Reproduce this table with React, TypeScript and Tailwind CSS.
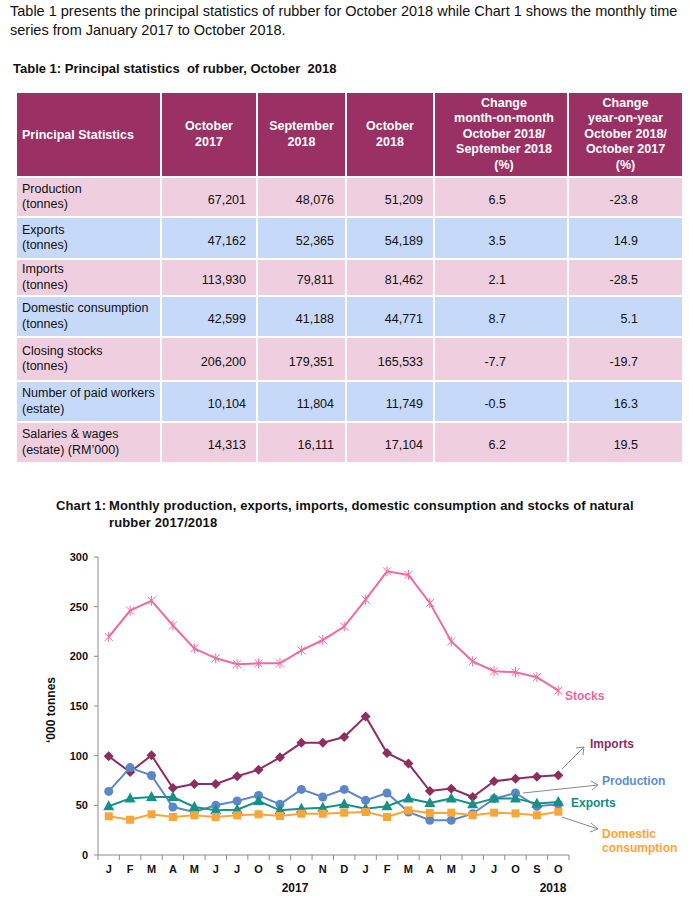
import React from "react";

const rows = [
  { a: "Production", b: "(tonnes)", v: ["67,201", "48,076", "51,209"], m: "6.5", y: "-23.8", bg: "bg-[#efcedf]", h: "h-[38px]" },
  { a: "Exports", b: "(tonnes)", v: ["47,162", "52,365", "54,189"], m: "3.5", y: "14.9", bg: "bg-[#c6d9f9]", h: "h-[40px]" },
  { a: "Imports", b: "(tonnes)", v: ["113,930", "79,811", "81,462"], m: "2.1", y: "-28.5", bg: "bg-[#efcedf]", h: "h-[35px]" },
  { a: "Domestic consumption", b: "(tonnes)", v: ["42,599", "41,188", "44,771"], m: "8.7", y: "5.1", bg: "bg-[#c6d9f9]", h: "h-[39px]" },
  { a: "Closing stocks", b: "(tonnes)", v: ["206,200", "179,351", "165,533"], m: "-7.7", y: "-19.7", bg: "bg-[#efcedf]", h: "h-[42px]" },
  { a: "Number of paid workers", b: "(estate)", v: ["10,104", "11,804", "11,749"], m: "-0.5", y: "16.3", bg: "bg-[#c6d9f9]", h: "h-[39px]" },
  { a: "Salaries & wages", b: "(estate) (RM\u2019000)", v: ["14,313", "16,111", "17,104"], m: "6.2", y: "19.5", bg: "bg-[#efcedf]", h: "h-[39px]" },
];

const stocks = [219.5, 246, 256, 231, 208, 198, 192, 193, 193, 206, 216.5, 230, 257, 285.6, 282, 253.7, 215, 195, 185, 184, 179, 165.5];
const imports = [99.4, 83.5, 100.4, 67.4, 71.5, 71.5, 79.2, 85.9, 98.3, 113, 113, 118.8, 139.5, 102.7, 92, 64.4, 66.8, 58.4, 74.2, 76.8, 78.9, 80.2];
const production = [64, 88, 80, 48.3, 43.3, 50, 54.4, 60, 51, 66, 58.4, 66, 55, 62.4, 43.3, 35, 35, 41.6, 56.7, 62.4, 49, 51];
const exportsD = [49, 57, 58.4, 58.4, 48.3, 45, 45.6, 54.4, 45, 46.6, 47.6, 51, 46.6, 49, 57, 52.4, 57, 51, 57, 57, 51.7, 53.3];
const domestic = [39, 35.5, 41, 38.3, 40, 38.3, 40, 41, 39.3, 41.6, 41.6, 42.6, 43.3, 38.3, 45, 42.3, 42.6, 40, 42.6, 41.9, 40, 43.6];

const months = ["J", "F", "M", "A", "M", "J", "J", "O", "S", "O", "N", "D", "J", "F", "M", "A", "M", "J", "J", "O", "S", "O"];

const X0 = 98;
const STEP = 21.41;
const Y0 = 313;
const K = 0.9933;
const xOf = (i: number) => X0 + STEP * (i + 0.5);
const yOf = (v: number) => Y0 - v * K;
const pts = (d: number[]) => d.map((v, i) => `${xOf(i).toFixed(1)},${yOf(v).toFixed(1)}`).join(" ");

const C = {
  stocks: "#ee6ba0",
  imports: "#8e2d5f",
  production: "#5b87c6",
  exports: "#179089",
  domestic: "#f9a53a",
};

function Chart() {
  const font = "'Liberation Sans', Arial, sans-serif";
  return (
    <svg width="689" height="358" viewBox="0 0 689 358" className="block">
      <line x1={X0} y1={15} x2={X0} y2={Y0} stroke="#8c8c8c" strokeWidth="1" />
      {[0, 50, 100, 150, 200, 250, 300].map((v) => (
        <g key={v}>
          <line x1={X0 - 4} y1={yOf(v)} x2={X0} y2={yOf(v)} stroke="#8c8c8c" strokeWidth="1" />
          <text x={88} y={yOf(v) + 4} textAnchor="end" fontFamily={font} fontSize="11" fontWeight="700" fill="#111">
            {v}
          </text>
        </g>
      ))}
      <line x1={X0} y1={Y0} x2={X0 + STEP * 22} y2={Y0} stroke="#8c8c8c" strokeWidth="1" />
      {Array.from({ length: 23 }).map((_, i) => (
        <line key={i} x1={X0 + STEP * i} y1={Y0} x2={X0 + STEP * i} y2={Y0 + 5} stroke="#8c8c8c" strokeWidth="1" />
      ))}
      {months.map((m, i) => (
        <text key={i} x={xOf(i)} y={331} textAnchor="middle" fontFamily={font} fontSize="11" fontWeight="700" fill="#111">
          {m}
        </text>
      ))}
      <text x={295} y={350} textAnchor="middle" fontFamily={font} fontSize="12" fontWeight="700" fill="#111">
        2017
      </text>
      <text x={553} y={350} textAnchor="middle" fontFamily={font} fontSize="12" fontWeight="700" fill="#111">
        2018
      </text>
      <text
        x={0}
        y={0}
        transform="translate(55,168) rotate(-90)"
        textAnchor="middle"
        fontFamily={font}
        fontSize="12"
        fontWeight="700"
        fill="#111"
      >
        {"\u2018000 tonnes"}
      </text>

      <polyline points={pts(stocks)} fill="none" stroke={C.stocks} strokeWidth="2" />
      {stocks.map((v, i) => {
        const x = xOf(i);
        const y = yOf(v);
        return (
          <g key={i} stroke={C.stocks} strokeWidth="1">
            <line x1={x - 4} y1={y - 4} x2={x + 4} y2={y + 4} />
            <line x1={x - 4} y1={y + 4} x2={x + 4} y2={y - 4} />
            <line x1={x} y1={y - 5} x2={x} y2={y + 5} />
          </g>
        );
      })}

      <polyline points={pts(imports)} fill="none" stroke={C.imports} strokeWidth="2" />
      {imports.map((v, i) => {
        const x = xOf(i);
        const y = yOf(v);
        return <polygon key={i} points={`${x},${y - 5} ${x + 5},${y} ${x},${y + 5} ${x - 5},${y}`} fill={C.imports} />;
      })}

      <polyline points={pts(production)} fill="none" stroke={C.production} strokeWidth="2" />
      {production.map((v, i) => (
        <circle key={i} cx={xOf(i)} cy={yOf(v)} r="4.5" fill={C.production} />
      ))}

      <polyline points={pts(exportsD)} fill="none" stroke={C.exports} strokeWidth="2" />
      {exportsD.map((v, i) => {
        const x = xOf(i);
        const y = yOf(v);
        return <polygon key={i} points={`${x},${y - 6} ${x + 5.5},${y + 4} ${x - 5.5},${y + 4}`} fill={C.exports} />;
      })}

      <polyline points={pts(domestic)} fill="none" stroke={C.domestic} strokeWidth="2" />
      {domestic.map((v, i) => (
        <rect key={i} x={xOf(i) - 4} y={yOf(v) - 4} width="8" height="8" fill={C.domestic} />
      ))}

      <g stroke="#8a8a8a" strokeWidth="1" fill="none">
        <line x1={562} y1={227} x2={584} y2={205} />
        <polyline points="576,206 584,205 583,213" />
        <line x1={523} y1={251} x2={598} y2={243} />
        <polyline points="591,239 598,243 592,248" />
        <line x1={562} y1={275} x2={598} y2={287} />
        <polyline points="591,281 598,287 590,290" />
      </g>
      <text x={565} y={158} fontFamily={font} fontSize="12" fontWeight="700" fill="#e8699c">Stocks</text>
      <text x={590} y={206} fontFamily={font} fontSize="12" fontWeight="700" fill={C.imports}>Imports</text>
      <text x={602} y={243} fontFamily={font} fontSize="12" fontWeight="700" fill="#5d8ed0">Production</text>
      <text x={571} y={265} fontFamily={font} fontSize="12" fontWeight="700" fill="#168a83">Exports</text>
      <text x={602} y={296} fontFamily={font} fontSize="12" fontWeight="700" fill={C.domestic}>Domestic</text>
      <text x={602} y={310} fontFamily={font} fontSize="12" fontWeight="700" fill={C.domestic}>consumption</text>
    </svg>
  );
}

export default function App() {
  return (
    <div className="w-[689px] h-[903px] bg-white overflow-hidden text-[#111] font-['Liberation_Sans',Arial,sans-serif]">
      <p className="pl-[10px] pt-[2px] text-[14.5px] leading-[19px] whitespace-nowrap">
        Table 1 presents the principal statistics of rubber for October 2018 while Chart 1 shows the monthly time
        <br />
        series from January 2017 to October 2018.
      </p>
      <h2 className="pl-[13px] mt-[20px] text-[13px] leading-[17px] font-bold">
        Table 1: Principal statistics&nbsp; of rubber, October&nbsp; 2018
      </h2>

      <div className="ml-[17px] mt-[16px] w-[665px] grid grid-cols-[143px_94px_87px_86px_132px_113px] gap-[2px] text-[12.5px] leading-[15.5px]">
        <div className="h-[83px] bg-[#9a3063] text-white font-bold text-[12.5px] flex items-center pl-[5px] pt-[3px]">Principal Statistics</div>
        <div className="h-[83px] bg-[#9a3063] text-white font-bold text-[12.5px] leading-[15.6px] flex items-center justify-center text-center">
          October<br />2017
        </div>
        <div className="h-[83px] bg-[#9a3063] text-white font-bold text-[12.5px] leading-[15.6px] flex items-center justify-center text-center">
          September<br />2018
        </div>
        <div className="h-[83px] bg-[#9a3063] text-white font-bold text-[12.5px] leading-[15.6px] flex items-center justify-center text-center">
          October<br />2018
        </div>
        <div className="h-[83px] bg-[#9a3063] text-white font-bold text-[12.5px] leading-[15.5px] flex items-center justify-center text-center pl-[6px]">
          Change<br />month-on-month<br />October 2018/<br />September 2018<br />(%)
        </div>
        <div className="h-[83px] bg-[#9a3063] text-white font-bold text-[12.5px] leading-[15.5px] flex items-center justify-center text-center">
          Change<br />year-on-year<br />October 2018/<br />October 2017<br />(%)
        </div>
        {rows.map((r) => (
          <React.Fragment key={r.a}>
            <div className={`${r.h} ${r.bg} flex flex-col justify-center pl-[5px]`}>
              <span>{r.a}</span>
              <span>{r.b}</span>
            </div>
            {r.v.map((v, i) => (
              <div key={i} className={`${r.h} ${r.bg} flex items-center justify-end pt-[7px] ${i === 1 ? "pr-[11px]" : "pr-[10px]"}`}>
                {v}
              </div>
            ))}
            <div className={`${r.h} ${r.bg} flex items-center justify-end pt-[7px] pr-[61px]`}>{r.m}</div>
            <div className={`${r.h} ${r.bg} flex items-center justify-end pt-[7px] pr-[44px]`}>{r.y}</div>
          </React.Fragment>
        ))}
      </div>

      <div className="mt-[35px] pl-[56px] flex text-[13px] leading-[17px] font-bold tracking-[0.13px]">
        <span className="w-[53px] shrink-0">Chart 1:</span>
        <span className="whitespace-nowrap">
          Monthly production, exports, imports, domestic consumption and stocks of natural
          <br />
          rubber 2017/2018
        </span>
      </div>
      <div className="mt-[11px]">
        <Chart />
      </div>
    </div>
  );
}
